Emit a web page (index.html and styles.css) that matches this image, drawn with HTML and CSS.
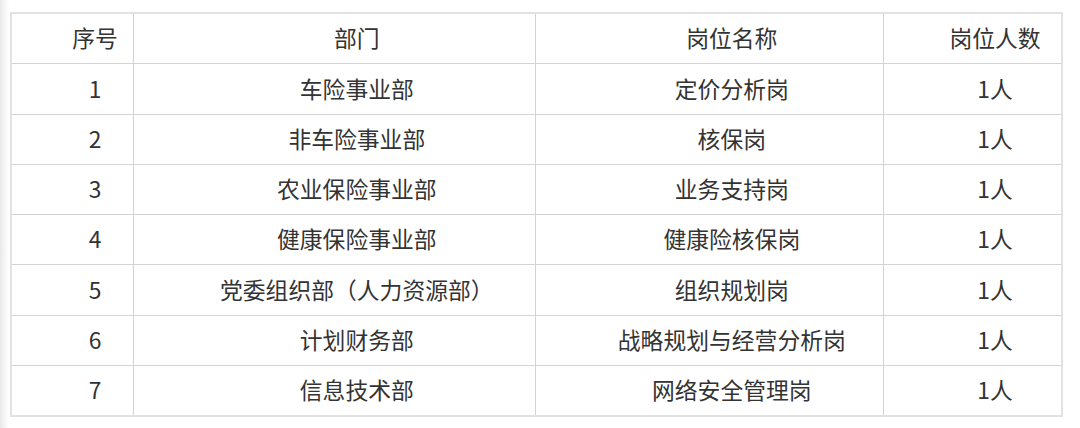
FILE: index.html
```html
<!DOCTYPE html>
<html lang="zh-CN">
<head>
<meta charset="utf-8">
<link rel="stylesheet" href="styles.css">
</head>
<body>
<div class="page">
<table class="jobs">
<colgroup>
<col class="c-no"><col class="c-dept"><col class="c-post"><col class="c-num">
</colgroup>
<thead>
<tr><th>序号</th><th>部门</th><th>岗位名称</th><th>岗位人数</th></tr>
</thead>
<tbody>
<tr><td>1</td><td>车险事业部</td><td>定价分析岗</td><td>1人</td></tr>
<tr><td>2</td><td>非车险事业部</td><td>核保岗</td><td>1人</td></tr>
<tr><td>3</td><td>农业保险事业部</td><td>业务支持岗</td><td>1人</td></tr>
<tr><td>4</td><td>健康保险事业部</td><td>健康险核保岗</td><td>1人</td></tr>
<tr><td>5</td><td>党委组织部（人力资源部）</td><td>组织规划岗</td><td>1人</td></tr>
<tr><td>6</td><td>计划财务部</td><td>战略规划与经营分析岗</td><td>1人</td></tr>
<tr><td>7</td><td>信息技术部</td><td>网络安全管理岗</td><td>1人</td></tr>
</tbody>
</table>
</div>
</body>
</html>
```
FILE: styles.css
```css
html, body {
  margin: 0;
  padding: 0;
  background: #fff;
}
body {
  width: 1080px;
  height: 428px;
  overflow: hidden;
  background: linear-gradient(to right, #e9e9e9 0, #f6f6f6 5px, #fff 9px) no-repeat;
  background-size: 9px 100%;
  font-family: "Noto Sans CJK SC", "Noto Sans", sans-serif;
  color: #333;
}
.page {
  padding: 12px 0 0 10px;
}
.jobs {
  border-collapse: collapse;
  width: 1051px;
  table-layout: fixed;
  border: 2px solid #e2e2e2;
}
.c-no { width: 122px; }
.c-dept { width: 402px; }
.c-post { width: 348px; }
.c-num { width: 179px; }
.jobs th,
.jobs td {
  border: 1px solid #d3d3d3;
  height: 49.3px;
  padding: 0;
  font-size: 22.8px;
  font-weight: normal;
  text-align: center;
  text-indent: 2em;
  vertical-align: middle;
  line-height: 1;
  white-space: nowrap;
}
```
